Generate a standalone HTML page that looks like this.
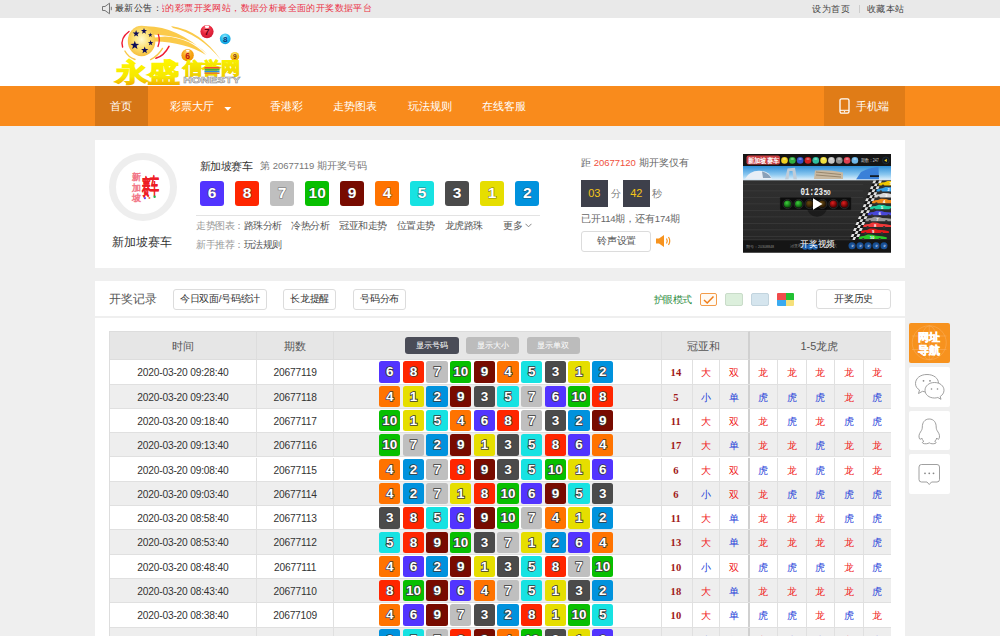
<!DOCTYPE html>
<html><head><meta charset="utf-8">
<style>
*{margin:0;padding:0;box-sizing:border-box}
html,body{width:1000px;height:636px;overflow:hidden;background:#efefef;font-family:"Liberation Sans",sans-serif;color:#333}
.a{position:absolute;white-space:nowrap}
#top{left:0;top:0;width:1000px;height:17.5px;background:#e9e9e9}
#hdr{left:0;top:17.5px;width:1000px;height:68.5px;background:#fff}
#nav{left:0;top:86px;width:1000px;height:39.7px;background:#f98b1c}
.nv{position:absolute;top:0;height:39.7px;line-height:40.5px;color:#fff;font-size:10.8px;font-weight:500;white-space:nowrap}
.pnl{position:absolute;left:95px;width:810px;background:#fff}
.bb{position:absolute;top:181px;width:24.3px;height:24.6px;border-radius:3px;color:#fff;font-weight:bold;font-size:15.5px;line-height:24.6px;text-align:center;font-style:normal;-webkit-text-stroke:1.2px rgba(40,40,40,0.55);paint-order:stroke fill}
.b1{background:#e6de00}.b2{background:#0092dd}.b3{background:#4b4b4b}.b4{background:#ff7300}.b5{background:#17e2e2}
.b6{background:#5234ff}.b7{background:#bfbfbf}.b8{background:#ff2600}.b9{background:#780b00}.b10{background:#07bf00}
.lk{position:absolute;font-size:9.5px;letter-spacing:-0.5px;color:#555;line-height:12px}
.gy{color:#999}
.btn{position:absolute;border:1px solid #dcdcdc;border-radius:3px;background:#fff;font-size:9.7px;letter-spacing:-0.3px;text-indent:0.3px;color:#333;text-align:center}
#tbl{position:absolute;left:108.7px;top:331px;width:782.3px;height:320px;border-left:1px solid #ddd;overflow:hidden}
.th{position:absolute;top:0;height:29.3px;background:#e6e6e6;border-top:1px solid #ddd;border-bottom:1px solid #ddd}
.tr{position:absolute;left:0;width:782.3px;height:24.3px;border-bottom:1px solid #e0e0e0}
.td{position:absolute;top:0;height:23.3px;line-height:25.8px;text-align:center;font-size:9.6px;color:#333;border-right:1px solid #e0e0e0}
.c1,.c2{font-size:10.2px;letter-spacing:-0.18px}
.c3{left:224.5px;width:327.6px}
.c1{left:0;width:147.4px}.c2{left:147.4px;width:77.1px}.c4{left:552.1px;width:31.2px;text-indent:-2px;color:#a01818;font-weight:bold;font-family:"Liberation Serif",serif;font-size:10.6px}
.c5{left:583.3px;width:27.3px}.c6{left:610.6px;width:29.4px;border-right:2px solid #d0d0d0}
.lh{width:28.46px}
.r{color:#f01a1a;font-weight:500}.u{color:#1a3ad8;font-weight:500}
.bl{position:absolute;left:269.5px;top:1.2px;height:21.3px}
.b{position:absolute;top:0;width:21.3px;height:21.3px;border-radius:2.5px;color:#fff;font-weight:bold;font-size:13.5px;line-height:21.3px;text-align:center;font-style:normal;
 -webkit-text-stroke:1.6px #3a3a3a;paint-order:stroke fill}
.side{position:absolute;left:909px;width:40.5px;height:39.5px;background:#fff;border-radius:2px}
</style></head><body>
<!-- TOPBAR -->
<div id="top" class="a">
  <svg class="a" style="left:101px;top:2px" width="12" height="13" viewBox="0 0 12 13"><path d="M1.5 4.5 H4 L8.5 1.2 V11.8 L4 8.5 H1.5 Z" fill="none" stroke="#777" stroke-width="1"/><path d="M10.3 4.8 V8.2" stroke="#777" stroke-width="1"/></svg>
  <div class="a" style="left:115px;top:0;height:17.5px;line-height:17.5px;font-size:9.37px;letter-spacing:0.4px;color:#333">最新公告：</div>
  <div class="a" style="left:162px;top:0;width:215px;height:17.5px;overflow:hidden">
    <div class="a" style="left:-6px;top:0;line-height:17.5px;font-size:9.37px;letter-spacing:0.4px;color:#eb3348">站的彩票开奖网站，数据分析最全面的开奖数据平台</div>
  </div>
  <div class="a" style="left:812px;top:0;line-height:17.5px;font-size:9.45px;letter-spacing:0.5px;color:#444">设为首页</div>
  <div class="a" style="left:859px;top:5px;width:1px;height:8px;background:#ccc"></div>
  <div class="a" style="left:867px;top:0;line-height:17.5px;font-size:9.45px;letter-spacing:0.35px;color:#444">收藏本站</div>
</div>
<div id="hdr" class="a">
<svg class="a" style="left:0;top:-17.5px" width="300" height="86" viewBox="0 0 300 86">
<defs>
<radialGradient id="yb" cx="0.5" cy="0.45" r="0.55"><stop offset="0" stop-color="#fffbd0"/><stop offset="0.55" stop-color="#fde070"/><stop offset="1" stop-color="#f6c040"/></radialGradient>
<linearGradient id="yt" gradientUnits="userSpaceOnUse" x1="0" y1="60" x2="0" y2="84"><stop offset="0" stop-color="#fff600"/><stop offset="0.7" stop-color="#f6e800"/><stop offset="1" stop-color="#f2b800"/></linearGradient>
<linearGradient id="yt2" gradientUnits="userSpaceOnUse" x1="0" y1="60" x2="0" y2="76"><stop offset="0" stop-color="#f8f000"/><stop offset="1" stop-color="#eed000"/></linearGradient>
<radialGradient id="r7" cx="0.45" cy="0.3" r="0.7"><stop offset="0" stop-color="#ff7080"/><stop offset="0.5" stop-color="#ea2a40"/><stop offset="1" stop-color="#d01830"/></radialGradient>
<radialGradient id="b8" cx="0.45" cy="0.3" r="0.7"><stop offset="0" stop-color="#90e8ff"/><stop offset="0.5" stop-color="#28c0f0"/><stop offset="1" stop-color="#10a0e0"/></radialGradient>
<radialGradient id="o6" cx="0.45" cy="0.3" r="0.7"><stop offset="0" stop-color="#ffd070"/><stop offset="0.5" stop-color="#f8a818"/><stop offset="1" stop-color="#f09000"/></radialGradient>
<radialGradient id="y9" cx="0.45" cy="0.3" r="0.7"><stop offset="0" stop-color="#fff090"/><stop offset="0.5" stop-color="#f8c820"/><stop offset="1" stop-color="#f0a800"/></radialGradient>
</defs>
<!-- swoosh -->
<path d="M142 26.3 Q175 24 207.4 54.4 Q190 35 150 34.5 Z" fill="#fbca4a"/>
<path d="M165 36.6 Q190 38 206 55 Q185 42 155 41.5 L155 37.5 Z" fill="#fbca4a"/>
<path d="M171 26 Q200 30 221 60 Q200 34 173 28 Z" fill="#fbca4a"/>
<!-- red / yellow orbit arcs -->
<path d="M129 31.5 Q120 38 122.6 47" fill="none" stroke="#ee1c30" stroke-width="1.4" stroke-linecap="round"/>
<path d="M158.3 34.5 Q160.5 40 158 46.5" fill="none" stroke="#ee1c30" stroke-width="1.3" stroke-linecap="round"/>
<path d="M169 46.4 Q164 56 155.9 58.3" fill="none" stroke="#ee1c30" stroke-width="1.5" stroke-linecap="round"/>
<path d="M124.9 51 Q128 57 135 59.5" fill="none" stroke="#f8c848" stroke-width="1.4" stroke-linecap="round"/>
<path d="M162.5 48.4 Q158 56 150.6 59.6" fill="none" stroke="#f8c848" stroke-width="1.4" stroke-linecap="round"/>
<!-- main ball -->
<ellipse cx="141.6" cy="41" rx="13.8" ry="15.2" fill="url(#yb)"/>
<g fill="#0c0c5a">
<path d="M0,-1 L0.235,-0.324 L0.951,-0.309 L0.380,0.124 L0.588,0.809 L0,0.4 L-0.588,0.809 L-0.380,0.124 L-0.951,-0.309 L-0.235,-0.324Z" transform="translate(136.1 33.7) scale(3.6)"/>
<path d="M0,-1 L0.235,-0.324 L0.951,-0.309 L0.380,0.124 L0.588,0.809 L0,0.4 L-0.588,0.809 L-0.380,0.124 L-0.951,-0.309 L-0.235,-0.324Z" transform="translate(144 31.1) scale(3.2)"/>
<path d="M0,-1 L0.235,-0.324 L0.951,-0.309 L0.380,0.124 L0.588,0.809 L0,0.4 L-0.588,0.809 L-0.380,0.124 L-0.951,-0.309 L-0.235,-0.324Z" transform="translate(150.3 35) scale(2.4)"/>
<path d="M0,-1 L0.235,-0.324 L0.951,-0.309 L0.380,0.124 L0.588,0.809 L0,0.4 L-0.588,0.809 L-0.380,0.124 L-0.951,-0.309 L-0.235,-0.324Z" transform="translate(134.8 45.3) scale(4.6)"/>
<path d="M0,-1 L0.235,-0.324 L0.951,-0.309 L0.380,0.124 L0.588,0.809 L0,0.4 L-0.588,0.809 L-0.380,0.124 L-0.951,-0.309 L-0.235,-0.324Z" transform="translate(144.7 50.2) scale(3.8)"/>
<path d="M0,-1 L0.235,-0.324 L0.951,-0.309 L0.380,0.124 L0.588,0.809 L0,0.4 L-0.588,0.809 L-0.380,0.124 L-0.951,-0.309 L-0.235,-0.324Z" transform="translate(150.6 43) scale(2.9)"/>
</g>
<!-- small balls -->
<circle cx="207" cy="31.6" r="6.6" fill="url(#r7)"/><ellipse cx="207" cy="26.8" rx="2.2" ry="1.2" fill="#fff"/><text x="207" y="35.3" font-size="9.5" font-weight="bold" text-anchor="middle" fill="#6a0010" font-family="Liberation Sans">7</text>
<circle cx="225.2" cy="38.8" r="5.4" fill="url(#b8)"/><text x="225.2" y="42" font-size="8" font-weight="bold" text-anchor="middle" fill="#0b3a7a" font-family="Liberation Sans">8</text>
<circle cx="187.6" cy="55.2" r="6.2" fill="url(#o6)"/><ellipse cx="187.8" cy="50.8" rx="1.8" ry="1" fill="#fff"/><text x="187.6" y="59" font-size="8.5" font-weight="bold" text-anchor="middle" fill="#c01010" font-family="Liberation Sans">6</text>
<circle cx="234.8" cy="56.4" r="4.4" fill="url(#y9)"/><text x="234.8" y="59.2" font-size="6.5" font-weight="bold" text-anchor="middle" fill="#803000" font-family="Liberation Sans">9</text>
<!-- text -->
<text x="116.3" y="81.2" font-size="25" font-weight="bold" fill="url(#yt)" stroke="url(#yt)" stroke-width="1.3" textLength="63.5" lengthAdjust="spacingAndGlyphs">永盛</text>
<text x="182.5" y="74" font-size="16.5" font-weight="bold" fill="url(#yt2)" stroke="url(#yt2)" stroke-width="0.9" textLength="58" lengthAdjust="spacingAndGlyphs">信誉网</text>
<rect x="204.5" y="67" width="15" height="1.6" fill="#f05030"/><rect x="204.5" y="68.8" width="15" height="1.8" fill="#40b040"/><rect x="204.5" y="70.8" width="15" height="1.6" fill="#3090e0"/><rect x="204.5" y="72.6" width="15" height="1.4" fill="#f08020"/>
<text x="183.3" y="83.4" font-size="8.8" fill="#fafafa" stroke="#8c8c8c" stroke-width="0.55" textLength="57" lengthAdjust="spacingAndGlyphs" font-family="Liberation Sans" font-weight="bold">HONESTY</text>
</svg>

</div>
<div id="nav" class="a">
  <div class="a" style="left:95px;top:0;width:53px;height:39.7px;background:#d67616"></div>
  <div class="nv" style="left:110.4px">首页</div>
  <div class="nv" style="left:170.4px">彩票大厅</div>
  <svg class="a" style="left:224.3px;top:21px" width="8" height="5"><path d="M0.3 0 H7.3 L3.8 3.8 Z" fill="#fff"/></svg>
  <div class="nv" style="left:270px">香港彩</div>
  <div class="nv" style="left:333.2px">走势图表</div>
  <div class="nv" style="left:407.6px">玩法规则</div>
  <div class="nv" style="left:481.5px">在线客服</div>
  <div class="a" style="left:824px;top:0;width:81px;height:39.7px;background:#e07c17"></div>
  <svg class="a" style="left:839px;top:12px" width="11" height="16" viewBox="0 0 11 16"><rect x="1" y="0.8" width="9" height="14.4" rx="1.6" fill="none" stroke="#fff" stroke-width="1.3"/><line x1="1" y1="12.3" x2="10" y2="12.3" stroke="#fff" stroke-width="1"/><circle cx="5.5" cy="13.8" r="0.7" fill="#fff"/></svg>
  <div class="nv" style="left:855.6px">手机端</div>
</div>

<!-- INFO PANEL -->
<div class="pnl" style="top:139.6px;height:128px"></div>
<div class="a" style="left:109px;top:153px;width:67.5px;height:67.5px;border-radius:50%;border:7px solid #eeeeee;background:#fff"></div>
<svg class="a" style="left:125px;top:168px" width="40" height="40" viewBox="125 168 40 40">
<g font-size="8.8" fill="#fff" stroke="#f27888" stroke-width="0.6">
<text x="132.3" y="180.3">新</text><text x="132.3" y="190.7">加</text><text x="132.3" y="201.1">坡</text>
</g>
<g transform="translate(142.2 193.8) scale(0.85 2.1)"><text x="0" y="0" font-size="10" font-weight="bold" fill="#ee1c25" stroke="#ee1c25" stroke-width="0.15">赛</text></g>
<g transform="translate(150.3 193) scale(0.9 2.1)"><text x="0" y="0" font-size="10" font-weight="bold" fill="#ee1c25" stroke="#ee1c25" stroke-width="0.15">车</text></g>
<circle cx="144.9" cy="198.2" r="1.1" fill="#6a3cf0"/><circle cx="149.4" cy="198" r="1" fill="#f77a30"/><circle cx="154.6" cy="196.8" r="1.2" fill="#22b24a"/>
</svg>

<div class="a" style="left:111.5px;top:234px;font-size:12px;line-height:16px;color:#333">新加坡赛车</div>
<div class="a" style="left:199.5px;top:158.5px;font-size:10.6px;letter-spacing:-0.4px;line-height:14px;color:#333">新加坡赛车</div>
<div class="a" style="left:260px;top:159px;font-size:9.5px;line-height:13px;color:#777">第 20677119 期开奖号码</div>
<i class="bb b6" style="left:200px">6</i><i class="bb b8" style="left:235px">8</i><i class="bb b7" style="left:270px">7</i><i class="bb b10" style="left:305px">10</i><i class="bb b9" style="left:340px">9</i><i class="bb b4" style="left:375px">4</i><i class="bb b5" style="left:410px">5</i><i class="bb b3" style="left:445px">3</i><i class="bb b1" style="left:480px">1</i><i class="bb b2" style="left:515.2px">2</i>
<div class="a" style="left:196px;top:214.5px;width:344px;height:1px;background:#e3e3e3"></div>
<div class="lk gy" style="left:196px;top:220px">走势图表：<span style="color:#555">路珠分析</span></div>
<div class="lk" style="left:291px;top:220px">冷热分析</div>
<div class="lk" style="left:339px;top:220px">冠亚和走势</div>
<div class="lk" style="left:396.6px;top:220px">位置走势</div>
<div class="lk" style="left:444.6px;top:220px">龙虎路珠</div>
<div class="lk" style="left:503px;top:220px">更多</div>
<svg class="a" style="left:525px;top:223px" width="7" height="5"><path d="M0.5 0.8 L3.5 3.8 L6.5 0.8" fill="none" stroke="#777" stroke-width="0.9"/></svg>
<div class="lk gy" style="left:196px;top:239px">新手推荐：<span style="color:#555">玩法规则</span></div>

<div class="lk" style="left:581px;top:157px;color:#666;letter-spacing:0">距 <span style="color:#f0503c">20677120</span> 期开奖仅有</div>
<div class="a" style="left:581px;top:180px;width:26.7px;height:27px;background:#3e404b;color:#f5c518;font-size:11px;line-height:27px;text-align:center">03</div>
<div class="lk" style="left:610.5px;top:188px;color:#777">分</div>
<div class="a" style="left:622.8px;top:180px;width:27px;height:27px;background:#3e404b;color:#f5c518;font-size:11px;line-height:27px;text-align:center">42</div>
<div class="lk" style="left:652px;top:188px;color:#777">秒</div>
<div class="lk" style="left:581px;top:213px;color:#666;letter-spacing:-0.15px">已开114期，还有174期</div>
<div class="btn" style="left:581.3px;top:230.8px;width:70.2px;height:20.8px;line-height:18.8px;color:#555">铃声设置</div>
<svg class="a" style="left:655px;top:234px" width="17" height="14" viewBox="0 0 17 14"><path d="M1 4.5 H4 L9 1 V13 L4 9.5 H1 Z" fill="#f7931e"/><path d="M11.5 4.5 Q13 7 11.5 9.5" fill="none" stroke="#f7931e" stroke-width="1.2"/><path d="M13.5 3 Q16 7 13.5 11" fill="none" stroke="#f7931e" stroke-width="1.2"/></svg>
<svg class="a" style="left:743px;top:154.2px" width="148" height="98.5" viewBox="0 0 148 98.5">
<defs>
<linearGradient id="sky" x1="0" y1="0" x2="0" y2="1"><stop offset="0" stop-color="#2f8fd8"/><stop offset="0.6" stop-color="#8cc8f0"/><stop offset="1" stop-color="#e8f4fc"/></linearGradient>
<linearGradient id="trk" x1="0" y1="0" x2="0" y2="1"><stop offset="0" stop-color="#303030"/><stop offset="1" stop-color="#262626"/></linearGradient>
<radialGradient id="gl" cx="0.4" cy="0.35" r="0.6"><stop offset="0" stop-color="#40d040"/><stop offset="1" stop-color="#0a5a0a"/></radialGradient>
<radialGradient id="al" cx="0.4" cy="0.35" r="0.6"><stop offset="0" stop-color="#6a4a10"/><stop offset="1" stop-color="#2a1a05"/></radialGradient>
<radialGradient id="rl" cx="0.4" cy="0.35" r="0.6"><stop offset="0" stop-color="#e02020"/><stop offset="1" stop-color="#600000"/></radialGradient>
</defs>
<rect width="148" height="98.5" fill="#1c1c1c"/>
<rect x="0" y="0" width="148" height="12" fill="#151515"/>
<rect x="3.5" y="1.5" width="33.5" height="9" rx="2" fill="#e8454a" opacity="0.85"/>
<text x="5" y="9.3" font-size="6.6" font-weight="900" fill="#fff" textLength="31" lengthAdjust="spacingAndGlyphs">新加坡赛车</text>
<circle cx="41.50" cy="6.4" r="3.3" fill="#f0d020"/><ellipse cx="41.50" cy="5" rx="1.8" ry="1" fill="#fff" opacity="0.35"/>
<circle cx="49.32" cy="6.4" r="3.3" fill="#30b040"/><ellipse cx="49.32" cy="5" rx="1.8" ry="1" fill="#fff" opacity="0.35"/>
<circle cx="57.14" cy="6.4" r="3.3" fill="#3050c8"/><ellipse cx="57.14" cy="5" rx="1.8" ry="1" fill="#fff" opacity="0.35"/>
<circle cx="64.96" cy="6.4" r="3.3" fill="#d02020"/><ellipse cx="64.96" cy="5" rx="1.8" ry="1" fill="#fff" opacity="0.35"/>
<circle cx="72.78" cy="6.4" r="3.3" fill="#30c0a0"/><ellipse cx="72.78" cy="5" rx="1.8" ry="1" fill="#fff" opacity="0.35"/>
<circle cx="80.60" cy="6.4" r="3.3" fill="#f0e040"/><ellipse cx="80.60" cy="5" rx="1.8" ry="1" fill="#fff" opacity="0.35"/>
<circle cx="88.42" cy="6.4" r="3.3" fill="#c8c8c8"/><ellipse cx="88.42" cy="5" rx="1.8" ry="1" fill="#fff" opacity="0.35"/>
<circle cx="96.24" cy="6.4" r="3.3" fill="#909090"/><ellipse cx="96.24" cy="5" rx="1.8" ry="1" fill="#fff" opacity="0.35"/>
<circle cx="104.06" cy="6.4" r="3.3" fill="#e04050"/><ellipse cx="104.06" cy="5" rx="1.8" ry="1" fill="#fff" opacity="0.35"/>
<circle cx="111.88" cy="6.4" r="3.3" fill="#70b8e8"/><ellipse cx="111.88" cy="5" rx="1.8" ry="1" fill="#fff" opacity="0.35"/>
<text x="117.8" y="8.2" font-size="4.6" fill="#ccc" textLength="18" lengthAdjust="spacingAndGlyphs">期数：247</text>
<circle cx="142.8" cy="6.4" r="3.4" fill="#101820" stroke="#284050" stroke-width="0.5"/><path d="M141.3 6.4 L143.8 4.8 V8Z" fill="#f0d020"/>
<rect x="0" y="12" width="148" height="14.4" fill="url(#sky)"/>
<path d="M2 25 Q6 17 16 16.8 Q26 17 28.5 24 L28.5 25 Z" fill="#e8eef6"/><path d="M19 17.5 Q26 19 28 24 L20 24 Z" fill="#8aa0b8"/>
<path d="M42 25.5 L44.5 14.5 L52 13.8 L54 25.5 L50.5 25.5 L49.5 17 L46.5 17 L45.5 25.5 Z" fill="#c0ccd8"/>
<path d="M71 25 L72 16.5 Q86 15.5 100 18.5 L100 25 Z" fill="#c8b8a0"/><path d="M73 18 L98 20.5 M73 21 L98 23" stroke="#8a7a60" stroke-width="0.8"/>
<path d="M113 25.5 L118 18 Q128 13 135.5 12.8 L136 25.5 Z" fill="#3a80d8"/><rect x="127" y="21.3" width="9" height="1.6" fill="#111"/>
<rect x="0" y="25.5" width="148" height="1.2" fill="#d8e4ee"/>
<rect x="0" y="26.4" width="148" height="59.6" fill="url(#trk)"/>
<rect x="0" y="30.0" width="120" height="0.8" fill="#3a3a3a"/>
<rect x="0" y="36.5" width="120" height="0.8" fill="#3a3a3a"/>
<rect x="0" y="43.0" width="120" height="0.8" fill="#3a3a3a"/>
<rect x="0" y="49.5" width="120" height="0.8" fill="#3a3a3a"/>
<rect x="0" y="56.0" width="120" height="0.8" fill="#3a3a3a"/>
<rect x="0" y="62.5" width="120" height="0.8" fill="#3a3a3a"/>
<rect x="0" y="69.0" width="120" height="0.8" fill="#3a3a3a"/>
<rect x="0" y="75.5" width="120" height="0.8" fill="#3a3a3a"/>
<rect x="0" y="82.0" width="120" height="0.8" fill="#3a3a3a"/>
<text x="57.5" y="41.2" font-size="11.5" font-family="Liberation Mono" font-weight="bold" fill="#f0f0f0" textLength="22.5" lengthAdjust="spacingAndGlyphs">01:23</text>
<text x="80.5" y="41.2" font-size="6.5" font-family="Liberation Sans" font-weight="bold" fill="#f0f0f0">50</text>
<rect x="36.9" y="43.3" width="71.3" height="12.8" rx="1" fill="#0c0c0c" stroke="#333" stroke-width="0.4"/>
<circle cx="74" cy="53" r="10" fill="#000" opacity="0.35"/>
<circle cx="44.5" cy="50" r="4.6" fill="#111" stroke="#3a3a3a" stroke-width="0.6"/><circle cx="44.5" cy="50" r="3.6" fill="url(#gl)"/>
<circle cx="55.6" cy="50" r="4.6" fill="#111" stroke="#3a3a3a" stroke-width="0.6"/><circle cx="55.6" cy="50" r="3.6" fill="url(#gl)"/>
<circle cx="66.6" cy="50" r="4.6" fill="#111" stroke="#3a3a3a" stroke-width="0.6"/><circle cx="66.6" cy="50" r="3.6" fill="url(#al)"/>
<circle cx="79.3" cy="50" r="4.6" fill="#111" stroke="#3a3a3a" stroke-width="0.6"/><circle cx="79.3" cy="50" r="3.6" fill="url(#al)"/>
<circle cx="90.4" cy="50" r="4.6" fill="#111" stroke="#3a3a3a" stroke-width="0.6"/><circle cx="90.4" cy="50" r="3.6" fill="url(#rl)"/>
<circle cx="101.4" cy="50" r="4.6" fill="#111" stroke="#3a3a3a" stroke-width="0.6"/><circle cx="101.4" cy="50" r="3.6" fill="url(#rl)"/>
<path d="M70 44.3 L79.5 50 L70 55.7 Z" fill="#fff"/>
<path d="M130.50 26.40 L133.30 26.40 L132.10 29.38 L129.30 29.38 Z" fill="#e0e0e0"/>
<path d="M133.30 26.40 L136.10 26.40 L134.90 29.38 L132.10 29.38 Z" fill="#151515"/>
<path d="M136.10 26.40 L138.90 26.40 L137.70 29.38 L134.90 29.38 Z" fill="#e0e0e0"/>
<path d="M129.30 29.38 L132.10 29.38 L130.90 32.36 L128.10 32.36 Z" fill="#151515"/>
<path d="M132.10 29.38 L134.90 29.38 L133.70 32.36 L130.90 32.36 Z" fill="#e0e0e0"/>
<path d="M134.90 29.38 L137.70 29.38 L136.50 32.36 L133.70 32.36 Z" fill="#151515"/>
<path d="M128.10 32.36 L130.90 32.36 L129.70 35.34 L126.90 35.34 Z" fill="#e0e0e0"/>
<path d="M130.90 32.36 L133.70 32.36 L132.50 35.34 L129.70 35.34 Z" fill="#151515"/>
<path d="M133.70 32.36 L136.50 32.36 L135.30 35.34 L132.50 35.34 Z" fill="#e0e0e0"/>
<path d="M126.90 35.34 L129.70 35.34 L128.50 38.32 L125.70 38.32 Z" fill="#151515"/>
<path d="M129.70 35.34 L132.50 35.34 L131.30 38.32 L128.50 38.32 Z" fill="#e0e0e0"/>
<path d="M132.50 35.34 L135.30 35.34 L134.10 38.32 L131.30 38.32 Z" fill="#151515"/>
<path d="M125.70 38.32 L128.50 38.32 L127.30 41.30 L124.50 41.30 Z" fill="#e0e0e0"/>
<path d="M128.50 38.32 L131.30 38.32 L130.10 41.30 L127.30 41.30 Z" fill="#151515"/>
<path d="M131.30 38.32 L134.10 38.32 L132.90 41.30 L130.10 41.30 Z" fill="#e0e0e0"/>
<path d="M124.50 41.30 L127.30 41.30 L126.10 44.28 L123.30 44.28 Z" fill="#151515"/>
<path d="M127.30 41.30 L130.10 41.30 L128.90 44.28 L126.10 44.28 Z" fill="#e0e0e0"/>
<path d="M130.10 41.30 L132.90 41.30 L131.70 44.28 L128.90 44.28 Z" fill="#151515"/>
<path d="M123.30 44.28 L126.10 44.28 L124.90 47.26 L122.10 47.26 Z" fill="#e0e0e0"/>
<path d="M126.10 44.28 L128.90 44.28 L127.70 47.26 L124.90 47.26 Z" fill="#151515"/>
<path d="M128.90 44.28 L131.70 44.28 L130.50 47.26 L127.70 47.26 Z" fill="#e0e0e0"/>
<path d="M122.10 47.26 L124.90 47.26 L123.70 50.24 L120.90 50.24 Z" fill="#151515"/>
<path d="M124.90 47.26 L127.70 47.26 L126.50 50.24 L123.70 50.24 Z" fill="#e0e0e0"/>
<path d="M127.70 47.26 L130.50 47.26 L129.30 50.24 L126.50 50.24 Z" fill="#151515"/>
<path d="M120.90 50.24 L123.70 50.24 L122.50 53.22 L119.70 53.22 Z" fill="#e0e0e0"/>
<path d="M123.70 50.24 L126.50 50.24 L125.30 53.22 L122.50 53.22 Z" fill="#151515"/>
<path d="M126.50 50.24 L129.30 50.24 L128.10 53.22 L125.30 53.22 Z" fill="#e0e0e0"/>
<path d="M119.70 53.22 L122.50 53.22 L121.30 56.20 L118.50 56.20 Z" fill="#151515"/>
<path d="M122.50 53.22 L125.30 53.22 L124.10 56.20 L121.30 56.20 Z" fill="#e0e0e0"/>
<path d="M125.30 53.22 L128.10 53.22 L126.90 56.20 L124.10 56.20 Z" fill="#151515"/>
<path d="M118.50 56.20 L121.30 56.20 L120.10 59.18 L117.30 59.18 Z" fill="#e0e0e0"/>
<path d="M121.30 56.20 L124.10 56.20 L122.90 59.18 L120.10 59.18 Z" fill="#151515"/>
<path d="M124.10 56.20 L126.90 56.20 L125.70 59.18 L122.90 59.18 Z" fill="#e0e0e0"/>
<path d="M117.30 59.18 L120.10 59.18 L118.90 62.16 L116.10 62.16 Z" fill="#151515"/>
<path d="M120.10 59.18 L122.90 59.18 L121.70 62.16 L118.90 62.16 Z" fill="#e0e0e0"/>
<path d="M122.90 59.18 L125.70 59.18 L124.50 62.16 L121.70 62.16 Z" fill="#151515"/>
<path d="M116.10 62.16 L118.90 62.16 L117.70 65.14 L114.90 65.14 Z" fill="#e0e0e0"/>
<path d="M118.90 62.16 L121.70 62.16 L120.50 65.14 L117.70 65.14 Z" fill="#151515"/>
<path d="M121.70 62.16 L124.50 62.16 L123.30 65.14 L120.50 65.14 Z" fill="#e0e0e0"/>
<path d="M114.90 65.14 L117.70 65.14 L116.50 68.12 L113.70 68.12 Z" fill="#151515"/>
<path d="M117.70 65.14 L120.50 65.14 L119.30 68.12 L116.50 68.12 Z" fill="#e0e0e0"/>
<path d="M120.50 65.14 L123.30 65.14 L122.10 68.12 L119.30 68.12 Z" fill="#151515"/>
<path d="M113.70 68.12 L116.50 68.12 L115.30 71.10 L112.50 71.10 Z" fill="#e0e0e0"/>
<path d="M116.50 68.12 L119.30 68.12 L118.10 71.10 L115.30 71.10 Z" fill="#151515"/>
<path d="M119.30 68.12 L122.10 68.12 L120.90 71.10 L118.10 71.10 Z" fill="#e0e0e0"/>
<path d="M112.50 71.10 L115.30 71.10 L114.10 74.08 L111.30 74.08 Z" fill="#151515"/>
<path d="M115.30 71.10 L118.10 71.10 L116.90 74.08 L114.10 74.08 Z" fill="#e0e0e0"/>
<path d="M118.10 71.10 L120.90 71.10 L119.70 74.08 L116.90 74.08 Z" fill="#151515"/>
<path d="M111.30 74.08 L114.10 74.08 L112.90 77.06 L110.10 77.06 Z" fill="#e0e0e0"/>
<path d="M114.10 74.08 L116.90 74.08 L115.70 77.06 L112.90 77.06 Z" fill="#151515"/>
<path d="M116.90 74.08 L119.70 74.08 L118.50 77.06 L115.70 77.06 Z" fill="#e0e0e0"/>
<path d="M110.10 77.06 L112.90 77.06 L111.70 80.04 L108.90 80.04 Z" fill="#151515"/>
<path d="M112.90 77.06 L115.70 77.06 L114.50 80.04 L111.70 80.04 Z" fill="#e0e0e0"/>
<path d="M115.70 77.06 L118.50 77.06 L117.30 80.04 L114.50 80.04 Z" fill="#151515"/>
<path d="M108.90 80.04 L111.70 80.04 L110.50 83.02 L107.70 83.02 Z" fill="#e0e0e0"/>
<path d="M111.70 80.04 L114.50 80.04 L113.30 83.02 L110.50 83.02 Z" fill="#151515"/>
<path d="M114.50 80.04 L117.30 80.04 L116.10 83.02 L113.30 83.02 Z" fill="#e0e0e0"/>
<path d="M107.70 83.02 L110.50 83.02 L109.30 86.00 L106.50 86.00 Z" fill="#151515"/>
<path d="M110.50 83.02 L113.30 83.02 L112.10 86.00 L109.30 86.00 Z" fill="#e0e0e0"/>
<path d="M113.30 83.02 L116.10 83.02 L114.90 86.00 L112.10 86.00 Z" fill="#151515"/>
<path d="M135.5 31.5 L136.0 29.4 Q138.5 28.4 141.5 28.3 L144.5 27.0 Q149.5 26.8 152.5 28.2 Q159.5 28.5 163.5 29.7 L163.5 31.5 Z" fill="#f0c800"/>
<circle cx="140.0" cy="31.6" r="1.2" fill="#333"/><circle cx="156.5" cy="31.6" r="1.2" fill="#333"/>
<text x="146.5" y="31.0" font-size="4.2" font-weight="bold" font-family="Liberation Sans" fill="#fff">1</text>
<path d="M133.3 37.4 L133.8 35.4 Q136.3 34.4 139.3 34.2 L142.3 32.9 Q147.3 32.8 150.3 34.1 Q157.3 34.4 161.3 35.6 L161.3 37.4 Z" fill="#38a0e8"/>
<circle cx="137.8" cy="37.5" r="1.2" fill="#333"/><circle cx="154.3" cy="37.5" r="1.2" fill="#333"/>
<text x="144.3" y="36.9" font-size="4.2" font-weight="bold" font-family="Liberation Sans" fill="#fff">2</text>
<path d="M131.1 43.4 L131.6 41.3 Q134.1 40.3 137.1 40.2 L140.1 38.9 Q145.1 38.7 148.1 40.1 Q155.1 40.4 159.1 41.6 L159.1 43.4 Z" fill="#d8d8d8"/>
<circle cx="135.6" cy="43.5" r="1.2" fill="#333"/><circle cx="152.1" cy="43.5" r="1.2" fill="#333"/>
<text x="142.1" y="42.9" font-size="4.2" font-weight="bold" font-family="Liberation Sans" fill="#fff">3</text>
<path d="M128.9 49.3 L129.4 47.2 Q131.9 46.2 134.9 46.1 L137.9 44.8 Q142.9 44.6 145.9 46.0 Q152.9 46.3 156.9 47.5 L156.9 49.3 Z" fill="#f08818"/>
<circle cx="133.4" cy="49.4" r="1.2" fill="#333"/><circle cx="149.9" cy="49.4" r="1.2" fill="#333"/>
<text x="139.9" y="48.8" font-size="4.2" font-weight="bold" font-family="Liberation Sans" fill="#fff">4</text>
<path d="M126.7 55.3 L127.2 53.2 Q129.7 52.2 132.7 52.1 L135.7 50.8 Q140.7 50.6 143.7 52.0 Q150.7 52.3 154.7 53.5 L154.7 55.3 Z" fill="#20d0a0"/>
<circle cx="131.2" cy="55.4" r="1.2" fill="#333"/><circle cx="147.7" cy="55.4" r="1.2" fill="#333"/>
<text x="137.7" y="54.8" font-size="4.2" font-weight="bold" font-family="Liberation Sans" fill="#fff">5</text>
<path d="M124.5 61.2 L125.0 59.2 Q127.5 58.2 130.5 58.1 L133.5 56.8 Q138.5 56.6 141.5 58.0 Q148.5 58.2 152.5 59.5 L152.5 61.2 Z" fill="#4848d8"/>
<circle cx="129.0" cy="61.4" r="1.2" fill="#333"/><circle cx="145.5" cy="61.4" r="1.2" fill="#333"/>
<text x="135.5" y="60.8" font-size="4.2" font-weight="bold" font-family="Liberation Sans" fill="#fff">6</text>
<path d="M122.3 67.2 L122.8 65.1 Q125.3 64.1 128.3 64.0 L131.3 62.7 Q136.3 62.5 139.3 63.9 Q146.3 64.2 150.3 65.4 L150.3 67.2 Z" fill="#9a9a9a"/>
<circle cx="126.8" cy="67.3" r="1.2" fill="#333"/><circle cx="143.3" cy="67.3" r="1.2" fill="#333"/>
<text x="133.3" y="66.7" font-size="4.2" font-weight="bold" font-family="Liberation Sans" fill="#fff">7</text>
<path d="M120.1 73.1 L120.6 71.0 Q123.1 70.0 126.1 69.9 L129.1 68.6 Q134.1 68.4 137.1 69.8 Q144.1 70.1 148.1 71.3 L148.1 73.1 Z" fill="#f03838"/>
<circle cx="124.6" cy="73.2" r="1.2" fill="#333"/><circle cx="141.1" cy="73.2" r="1.2" fill="#333"/>
<text x="131.1" y="72.6" font-size="4.2" font-weight="bold" font-family="Liberation Sans" fill="#fff">8</text>
<path d="M117.9 79.1 L118.4 77.0 Q120.9 76.0 123.9 75.9 L126.9 74.6 Q131.9 74.4 134.9 75.8 Q141.9 76.1 145.9 77.3 L145.9 79.1 Z" fill="#e01818"/>
<circle cx="122.4" cy="79.2" r="1.2" fill="#333"/><circle cx="138.9" cy="79.2" r="1.2" fill="#333"/>
<text x="128.9" y="78.6" font-size="4.2" font-weight="bold" font-family="Liberation Sans" fill="#fff">9</text>
<path d="M115.7 85.0 L116.2 83.0 Q118.7 82.0 121.7 81.8 L124.7 80.5 Q129.7 80.3 132.7 81.8 Q139.7 82.0 143.7 83.2 L143.7 85.0 Z" fill="#28c828"/>
<circle cx="120.2" cy="85.2" r="1.2" fill="#333"/><circle cx="136.7" cy="85.2" r="1.2" fill="#333"/>
<text x="126.7" y="84.5" font-size="4.2" font-weight="bold" font-family="Liberation Sans" fill="#fff">10</text>
<rect x="0" y="86" width="148" height="12.5" fill="#151515"/>
<rect x="0" y="85.6" width="110" height="0.6" fill="#444"/>
<text x="3" y="93.5" font-size="3.6" fill="#8a8a8a">期号：20308848</text>
<text x="47" y="92.5" font-size="3.6" fill="#8a8a8a">冠亚和</text><text x="90" y="92.5" font-size="3.6" fill="#8a8a8a">大</text>
<circle cx="62" cy="92.8" r="3" fill="#1e62b0"/>
<circle cx="67" cy="92.8" r="3" fill="#1e62b0"/>
<circle cx="72" cy="92.8" r="3" fill="#1e62b0"/>
<circle cx="109" cy="91.7" r="3.5" fill="#174f94"/><text x="109" y="93" font-size="3.4" fill="#cde" text-anchor="middle">龙</text>
<circle cx="117" cy="91.7" r="3.5" fill="#174f94"/><text x="117" y="93" font-size="3.4" fill="#cde" text-anchor="middle">龙</text>
<circle cx="125" cy="91.7" r="3.5" fill="#174f94"/><text x="125" y="93" font-size="3.4" fill="#cde" text-anchor="middle">龙</text>
<circle cx="133" cy="91.7" r="3.5" fill="#174f94"/><text x="133" y="93" font-size="3.4" fill="#cde" text-anchor="middle">龙</text>
<circle cx="141" cy="91.7" r="3.5" fill="#174f94"/><text x="141" y="93" font-size="3.4" fill="#cde" text-anchor="middle">龙</text>
<text x="57.3" y="92.6" font-size="8.9" font-weight="500" fill="#fff" textLength="34.7" lengthAdjust="spacingAndGlyphs">开奖视频</text>
</svg>

<!-- RECORD HEADER -->
<div class="pnl" style="top:281px;height:34.5px"></div>
<div class="a" style="left:108.8px;top:290px;font-size:12.2px;line-height:18px;color:#555">开奖记录</div>
<div class="btn" style="left:173.2px;top:288.8px;width:93.4px;height:20.8px;line-height:18.8px">今日双面/号码统计</div>
<div class="btn" style="left:283.4px;top:288.8px;width:52.5px;height:20.8px;line-height:18.8px">长龙提醒</div>
<div class="btn" style="left:353px;top:288.8px;width:52.8px;height:20.8px;line-height:18.8px">号码分布</div>
<div class="lk" style="left:653.5px;top:294px;color:#2e8b3e">护眼模式</div>
<div class="a" style="left:699.8px;top:292.5px;width:17.4px;height:13.5px;border:1px solid #f39c4a;border-radius:2px;background:#fffaf3"></div>
<svg class="a" style="left:702px;top:294.5px" width="13" height="10"><path d="M2 5 L5.2 8 L11.5 1.5" fill="none" stroke="#ef7d1a" stroke-width="1.5"/></svg>
<div class="a" style="left:725.3px;top:292.5px;width:17.4px;height:13.5px;border:1px solid #c9dcc9;border-radius:2px;background:#dcefdc"></div>
<div class="a" style="left:751.3px;top:292.5px;width:17.4px;height:13.5px;border:1px solid #c2d4de;border-radius:2px;background:#d5e5ee"></div>
<div class="a" style="left:777px;top:293px;width:17px;height:13px;overflow:hidden;border-radius:1px">
  <div class="a" style="left:0;top:0;width:8.5px;height:6.5px;background:#f04b4b"></div>
  <div class="a" style="left:8.5px;top:0;width:8.5px;height:6.5px;background:#22c033"></div>
  <div class="a" style="left:0;top:6.5px;width:8.5px;height:6.5px;background:#3aaaf0"></div>
  <div class="a" style="left:8.5px;top:6.5px;width:8.5px;height:6.5px;background:#f5e07a"></div>
</div>
<div class="btn" style="left:816.3px;top:288.6px;width:74.6px;height:20.5px;line-height:18.5px">开奖历史</div>

<!-- TABLE PANEL -->
<div class="pnl" style="top:318px;height:330px"></div>
<div id="tbl">
  <div class="th" style="left:0;width:147.4px;border-right:1px solid #ddd"></div>
  <div class="th" style="left:147.4px;width:77.1px;border-right:1px solid #ddd"></div>
  <div class="th" style="left:224.5px;width:327.6px;border-right:1px solid #ddd"></div>
  <div class="th" style="left:552.1px;width:88px;border-right:2px solid #d0d0d0"></div>
  <div class="th" style="left:640.1px;width:142.2px;border-right:1px solid #ddd"></div>
  <div class="a" style="left:62.8px;top:8px;font-size:10.9px;line-height:14px;color:#555">时间</div>
  <div class="a" style="left:174.5px;top:8px;font-size:10.9px;line-height:14px;color:#555">期数</div>
  <div class="a" style="left:577.6px;top:8px;font-size:10.9px;line-height:14px;color:#555">冠亚和</div>
  <div class="a" style="left:690.8px;top:8px;font-size:10.9px;line-height:14px;color:#555">1-5龙虎</div>
  <div class="a" style="left:295.6px;top:5.5px;width:53.5px;height:17.4px;border-radius:3px;background:#4a4c57;color:#fff;font-size:8.1px;font-weight:500;line-height:17.4px;text-align:center">显示号码</div>
  <div class="a" style="left:356.1px;top:5.5px;width:53.5px;height:17.4px;border-radius:3px;background:#bcbcbc;color:#fff;font-size:8.1px;font-weight:500;line-height:17.4px;text-align:center">显示大小</div>
  <div class="a" style="left:417px;top:5.5px;width:53.6px;height:17.4px;border-radius:3px;background:#bcbcbc;color:#fff;font-size:8.1px;font-weight:500;line-height:17.4px;text-align:center">显示单双</div>
  <div class="a" style="left:0;top:0;width:1px;height:1px"></div>
  <div style="position:absolute;left:0;top:-331px">
<div class="tr" style="top:360.3px;background:#fff">
<div class="td c1">2020-03-20 09:28:40</div><div class="td c2">20677119</div><div class="td c3"></div>
<div class="bl"><i class="b b6" style="left:0.00px">6</i><i class="b b8" style="left:23.65px">8</i><i class="b b7" style="left:47.30px">7</i><i class="b b10" style="left:70.95px">10</i><i class="b b9" style="left:94.60px">9</i><i class="b b4" style="left:118.25px">4</i><i class="b b5" style="left:141.90px">5</i><i class="b b3" style="left:165.55px">3</i><i class="b b1" style="left:189.20px">1</i><i class="b b2" style="left:212.85px">2</i></div>
<div class="td c4">14</div><div class="td c5 r">大</div><div class="td c6 r">双</div>
<div class="td lh r" style="left:640.0px">龙</div>
<div class="td lh r" style="left:668.5px">龙</div>
<div class="td lh r" style="left:696.9px">龙</div>
<div class="td lh r" style="left:725.4px">龙</div>
<div class="td lh r" style="left:753.8px">龙</div>
</div>
<div class="tr" style="top:384.6px;background:#eeeeee">
<div class="td c1">2020-03-20 09:23:40</div><div class="td c2">20677118</div><div class="td c3"></div>
<div class="bl"><i class="b b4" style="left:0.00px">4</i><i class="b b1" style="left:23.65px">1</i><i class="b b2" style="left:47.30px">2</i><i class="b b9" style="left:70.95px">9</i><i class="b b3" style="left:94.60px">3</i><i class="b b5" style="left:118.25px">5</i><i class="b b7" style="left:141.90px">7</i><i class="b b6" style="left:165.55px">6</i><i class="b b10" style="left:189.20px">10</i><i class="b b8" style="left:212.85px">8</i></div>
<div class="td c4">5</div><div class="td c5 u">小</div><div class="td c6 u">单</div>
<div class="td lh u" style="left:640.0px">虎</div>
<div class="td lh u" style="left:668.5px">虎</div>
<div class="td lh u" style="left:696.9px">虎</div>
<div class="td lh r" style="left:725.4px">龙</div>
<div class="td lh u" style="left:753.8px">虎</div>
</div>
<div class="tr" style="top:408.9px;background:#fff">
<div class="td c1">2020-03-20 09:18:40</div><div class="td c2">20677117</div><div class="td c3"></div>
<div class="bl"><i class="b b10" style="left:0.00px">10</i><i class="b b1" style="left:23.65px">1</i><i class="b b5" style="left:47.30px">5</i><i class="b b4" style="left:70.95px">4</i><i class="b b6" style="left:94.60px">6</i><i class="b b8" style="left:118.25px">8</i><i class="b b7" style="left:141.90px">7</i><i class="b b3" style="left:165.55px">3</i><i class="b b2" style="left:189.20px">2</i><i class="b b9" style="left:212.85px">9</i></div>
<div class="td c4">11</div><div class="td c5 r">大</div><div class="td c6 r">双</div>
<div class="td lh r" style="left:640.0px">龙</div>
<div class="td lh u" style="left:668.5px">虎</div>
<div class="td lh r" style="left:696.9px">龙</div>
<div class="td lh u" style="left:725.4px">虎</div>
<div class="td lh u" style="left:753.8px">虎</div>
</div>
<div class="tr" style="top:433.2px;background:#eeeeee">
<div class="td c1">2020-03-20 09:13:40</div><div class="td c2">20677116</div><div class="td c3"></div>
<div class="bl"><i class="b b10" style="left:0.00px">10</i><i class="b b7" style="left:23.65px">7</i><i class="b b2" style="left:47.30px">2</i><i class="b b9" style="left:70.95px">9</i><i class="b b1" style="left:94.60px">1</i><i class="b b3" style="left:118.25px">3</i><i class="b b5" style="left:141.90px">5</i><i class="b b8" style="left:165.55px">8</i><i class="b b6" style="left:189.20px">6</i><i class="b b4" style="left:212.85px">4</i></div>
<div class="td c4">17</div><div class="td c5 r">大</div><div class="td c6 u">单</div>
<div class="td lh r" style="left:640.0px">龙</div>
<div class="td lh r" style="left:668.5px">龙</div>
<div class="td lh u" style="left:696.9px">虎</div>
<div class="td lh r" style="left:725.4px">龙</div>
<div class="td lh r" style="left:753.8px">龙</div>
</div>
<div class="tr" style="top:457.5px;background:#fff">
<div class="td c1">2020-03-20 09:08:40</div><div class="td c2">20677115</div><div class="td c3"></div>
<div class="bl"><i class="b b4" style="left:0.00px">4</i><i class="b b2" style="left:23.65px">2</i><i class="b b7" style="left:47.30px">7</i><i class="b b8" style="left:70.95px">8</i><i class="b b9" style="left:94.60px">9</i><i class="b b3" style="left:118.25px">3</i><i class="b b5" style="left:141.90px">5</i><i class="b b10" style="left:165.55px">10</i><i class="b b1" style="left:189.20px">1</i><i class="b b6" style="left:212.85px">6</i></div>
<div class="td c4">6</div><div class="td c5 r">大</div><div class="td c6 r">双</div>
<div class="td lh u" style="left:640.0px">虎</div>
<div class="td lh r" style="left:668.5px">龙</div>
<div class="td lh u" style="left:696.9px">虎</div>
<div class="td lh r" style="left:725.4px">龙</div>
<div class="td lh r" style="left:753.8px">龙</div>
</div>
<div class="tr" style="top:481.8px;background:#eeeeee">
<div class="td c1">2020-03-20 09:03:40</div><div class="td c2">20677114</div><div class="td c3"></div>
<div class="bl"><i class="b b4" style="left:0.00px">4</i><i class="b b2" style="left:23.65px">2</i><i class="b b7" style="left:47.30px">7</i><i class="b b1" style="left:70.95px">1</i><i class="b b8" style="left:94.60px">8</i><i class="b b10" style="left:118.25px">10</i><i class="b b6" style="left:141.90px">6</i><i class="b b9" style="left:165.55px">9</i><i class="b b5" style="left:189.20px">5</i><i class="b b3" style="left:212.85px">3</i></div>
<div class="td c4">6</div><div class="td c5 u">小</div><div class="td c6 r">双</div>
<div class="td lh r" style="left:640.0px">龙</div>
<div class="td lh u" style="left:668.5px">虎</div>
<div class="td lh u" style="left:696.9px">虎</div>
<div class="td lh u" style="left:725.4px">虎</div>
<div class="td lh u" style="left:753.8px">虎</div>
</div>
<div class="tr" style="top:506.1px;background:#fff">
<div class="td c1">2020-03-20 08:58:40</div><div class="td c2">20677113</div><div class="td c3"></div>
<div class="bl"><i class="b b3" style="left:0.00px">3</i><i class="b b8" style="left:23.65px">8</i><i class="b b5" style="left:47.30px">5</i><i class="b b6" style="left:70.95px">6</i><i class="b b9" style="left:94.60px">9</i><i class="b b10" style="left:118.25px">10</i><i class="b b7" style="left:141.90px">7</i><i class="b b4" style="left:165.55px">4</i><i class="b b1" style="left:189.20px">1</i><i class="b b2" style="left:212.85px">2</i></div>
<div class="td c4">11</div><div class="td c5 r">大</div><div class="td c6 u">单</div>
<div class="td lh r" style="left:640.0px">龙</div>
<div class="td lh r" style="left:668.5px">龙</div>
<div class="td lh r" style="left:696.9px">龙</div>
<div class="td lh u" style="left:725.4px">虎</div>
<div class="td lh u" style="left:753.8px">虎</div>
</div>
<div class="tr" style="top:530.4px;background:#eeeeee">
<div class="td c1">2020-03-20 08:53:40</div><div class="td c2">20677112</div><div class="td c3"></div>
<div class="bl"><i class="b b5" style="left:0.00px">5</i><i class="b b8" style="left:23.65px">8</i><i class="b b9" style="left:47.30px">9</i><i class="b b10" style="left:70.95px">10</i><i class="b b3" style="left:94.60px">3</i><i class="b b7" style="left:118.25px">7</i><i class="b b1" style="left:141.90px">1</i><i class="b b2" style="left:165.55px">2</i><i class="b b6" style="left:189.20px">6</i><i class="b b4" style="left:212.85px">4</i></div>
<div class="td c4">13</div><div class="td c5 r">大</div><div class="td c6 u">单</div>
<div class="td lh r" style="left:640.0px">龙</div>
<div class="td lh r" style="left:668.5px">龙</div>
<div class="td lh r" style="left:696.9px">龙</div>
<div class="td lh r" style="left:725.4px">龙</div>
<div class="td lh u" style="left:753.8px">虎</div>
</div>
<div class="tr" style="top:554.7px;background:#fff">
<div class="td c1">2020-03-20 08:48:40</div><div class="td c2">20677111</div><div class="td c3"></div>
<div class="bl"><i class="b b4" style="left:0.00px">4</i><i class="b b6" style="left:23.65px">6</i><i class="b b2" style="left:47.30px">2</i><i class="b b9" style="left:70.95px">9</i><i class="b b1" style="left:94.60px">1</i><i class="b b3" style="left:118.25px">3</i><i class="b b5" style="left:141.90px">5</i><i class="b b8" style="left:165.55px">8</i><i class="b b7" style="left:189.20px">7</i><i class="b b10" style="left:212.85px">10</i></div>
<div class="td c4">10</div><div class="td c5 u">小</div><div class="td c6 r">双</div>
<div class="td lh u" style="left:640.0px">虎</div>
<div class="td lh u" style="left:668.5px">虎</div>
<div class="td lh u" style="left:696.9px">虎</div>
<div class="td lh r" style="left:725.4px">龙</div>
<div class="td lh u" style="left:753.8px">虎</div>
</div>
<div class="tr" style="top:579.0px;background:#eeeeee">
<div class="td c1">2020-03-20 08:43:40</div><div class="td c2">20677110</div><div class="td c3"></div>
<div class="bl"><i class="b b8" style="left:0.00px">8</i><i class="b b10" style="left:23.65px">10</i><i class="b b9" style="left:47.30px">9</i><i class="b b6" style="left:70.95px">6</i><i class="b b4" style="left:94.60px">4</i><i class="b b7" style="left:118.25px">7</i><i class="b b5" style="left:141.90px">5</i><i class="b b1" style="left:165.55px">1</i><i class="b b3" style="left:189.20px">3</i><i class="b b2" style="left:212.85px">2</i></div>
<div class="td c4">18</div><div class="td c5 r">大</div><div class="td c6 u">单</div>
<div class="td lh r" style="left:640.0px">龙</div>
<div class="td lh r" style="left:668.5px">龙</div>
<div class="td lh r" style="left:696.9px">龙</div>
<div class="td lh r" style="left:725.4px">龙</div>
<div class="td lh u" style="left:753.8px">虎</div>
</div>
<div class="tr" style="top:603.3px;background:#fff">
<div class="td c1">2020-03-20 08:38:40</div><div class="td c2">20677109</div><div class="td c3"></div>
<div class="bl"><i class="b b4" style="left:0.00px">4</i><i class="b b6" style="left:23.65px">6</i><i class="b b9" style="left:47.30px">9</i><i class="b b7" style="left:70.95px">7</i><i class="b b3" style="left:94.60px">3</i><i class="b b2" style="left:118.25px">2</i><i class="b b8" style="left:141.90px">8</i><i class="b b1" style="left:165.55px">1</i><i class="b b10" style="left:189.20px">10</i><i class="b b5" style="left:212.85px">5</i></div>
<div class="td c4">10</div><div class="td c5 r">大</div><div class="td c6 u">单</div>
<div class="td lh u" style="left:640.0px">虎</div>
<div class="td lh u" style="left:668.5px">虎</div>
<div class="td lh r" style="left:696.9px">龙</div>
<div class="td lh u" style="left:725.4px">虎</div>
<div class="td lh r" style="left:753.8px">龙</div>
</div>
<div class="tr" style="top:627.6px;background:#eeeeee">
<div class="td c1">2020-03-20 08:33:40</div><div class="td c2">20677108</div><div class="td c3"></div>
<div class="bl"><i class="b b2" style="left:0.00px">2</i><i class="b b5" style="left:23.65px">5</i><i class="b b7" style="left:47.30px">7</i><i class="b b8" style="left:70.95px">8</i><i class="b b9" style="left:94.60px">9</i><i class="b b4" style="left:118.25px">4</i><i class="b b10" style="left:141.90px">10</i><i class="b b3" style="left:165.55px">3</i><i class="b b1" style="left:189.20px">1</i><i class="b b6" style="left:212.85px">6</i></div>
<div class="td c4">9</div><div class="td c5 u">小</div><div class="td c6 u">单</div>
<div class="td lh r" style="left:640.0px">龙</div>
<div class="td lh u" style="left:668.5px">虎</div>
<div class="td lh u" style="left:696.9px">虎</div>
<div class="td lh r" style="left:725.4px">龙</div>
<div class="td lh u" style="left:753.8px">虎</div>
</div>
  </div>
</div>

<!-- SIDEBAR -->
<div class="side" style="top:323.1px;background:#f7921e"></div>
<div class="side" style="top:367.3px"></div>
<div class="side" style="top:410.8px"></div>
<div class="side" style="top:454.4px"></div>
<svg class="a" style="left:909px;top:323.1px" width="40.5" height="39.5" viewBox="0 0 40.5 39.5">
<g fill="none" stroke="#fbb060" stroke-width="0.6" opacity="0.9">
<circle cx="20.25" cy="19.75" r="17"/><ellipse cx="20.25" cy="19.75" rx="8" ry="17"/>
<line x1="3" y1="13" x2="37.5" y2="13"/><line x1="3" y1="26.5" x2="37.5" y2="26.5"/><line x1="20.25" y1="2.5" x2="20.25" y2="37"/>
</g>
<text x="20.25" y="17.8" font-size="11" font-weight="bold" fill="#fff" stroke="#fff" stroke-width="0.5" text-anchor="middle">网址</text>
<text x="20.25" y="30.8" font-size="11" font-weight="bold" fill="#fff" stroke="#fff" stroke-width="0.5" text-anchor="middle">导航</text>
</svg>
<svg class="a" style="left:909px;top:367.3px" width="40.5" height="39.5" viewBox="0 0 40.5 39.5">
<g fill="#fff" stroke="#888" stroke-width="0.8">
<path d="M18 7.5 C11 7.5 6.5 11.5 6.5 16.5 C6.5 19.5 8 21.5 10.5 23 L9.5 26.5 L13.5 24.3 C15 24.8 16.5 25 18 25 C25 25 29.5 21 29.5 16.3 C29.5 11.5 25 7.5 18 7.5 Z"/>
<path d="M25.5 15.5 C20 15.5 16 19 16 23.3 C16 27.6 20 31 25.5 31 C26.7 31 27.8 30.8 28.8 30.5 L32 32.3 L31.2 29.5 C33.3 28.2 35 26 35 23.3 C35 19 31 15.5 25.5 15.5 Z"/>
</g>
<g fill="#888"><circle cx="14.5" cy="13.8" r="0.9"/><circle cx="21" cy="13.8" r="0.9"/><circle cx="22.5" cy="22" r="0.8"/><circle cx="28.5" cy="22" r="0.8"/></g>
</svg>
<svg class="a" style="left:909px;top:410.8px" width="40.5" height="39.5" viewBox="0 0 40.5 39.5">
<path d="M20.25 8 C15.5 8 13.3 11.8 13.3 16 C13.3 18 12.8 19 11.5 21 C10 23.2 9.5 25.5 10.5 27.8 C11 28.8 12 28 12.8 27 C13.2 28.8 14 29.8 14.8 30.3 C13.3 30.8 13 31.8 14 32.3 C16 33.2 19 32.8 20.25 31.8 C21.5 32.8 24.5 33.2 26.5 32.3 C27.5 31.8 27.2 30.8 25.7 30.3 C26.5 29.8 27.3 28.8 27.7 27 C28.5 28 29.5 28.8 30 27.8 C31 25.5 30.5 23.2 29 21 C27.7 19 27.2 18 27.2 16 C27.2 11.8 25 8 20.25 8 Z" fill="none" stroke="#888" stroke-width="0.8"/>
</svg>
<svg class="a" style="left:909px;top:454.4px" width="40.5" height="39.5" viewBox="0 0 40.5 39.5">
<path d="M12.5 10.5 H28 Q30.5 10.5 30.5 13 V25.5 Q30.5 28 28 28 H22.5 L20.25 30.5 L18 28 H12.5 Q10 28 10 25.5 V13 Q10 10.5 12.5 10.5 Z" fill="none" stroke="#888" stroke-width="0.8"/>
<g fill="#888"><circle cx="16" cy="19.3" r="0.9"/><circle cx="20.25" cy="19.3" r="0.9"/><circle cx="24.5" cy="19.3" r="0.9"/></g>
</svg>

</body></html>
